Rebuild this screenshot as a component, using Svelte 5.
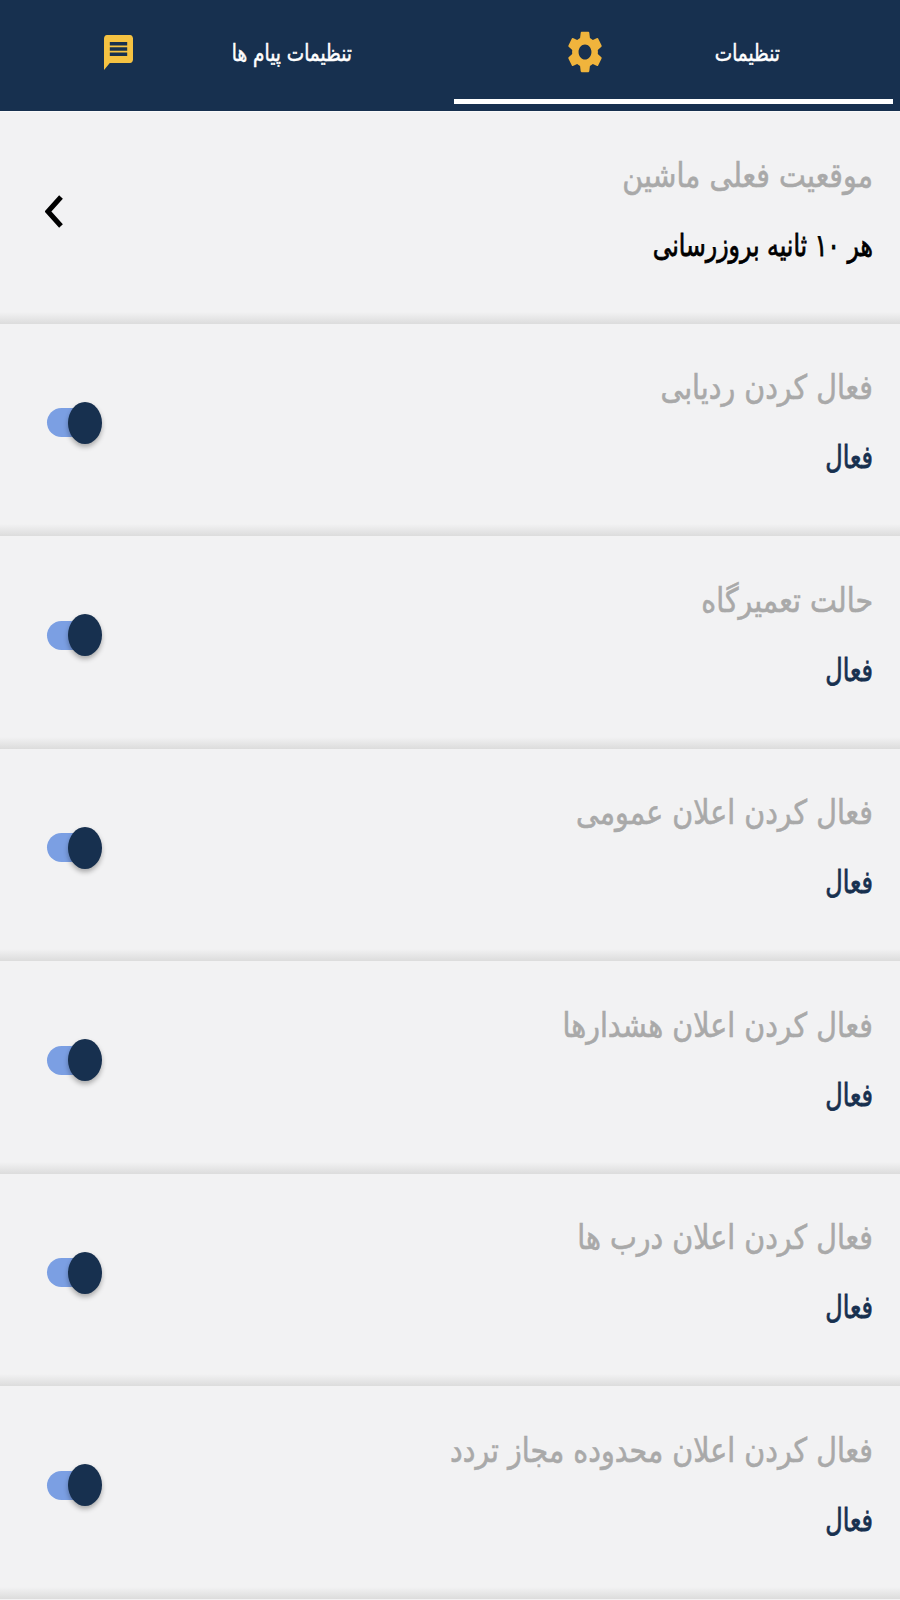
<script>
	const rows = [
		'فعال کردن ردیابی',
		'حالت تعمیرگاه',
		'فعال کردن اعلان عمومی',
		'فعال کردن اعلان هشدارها',
		'فعال کردن اعلان درب ها',
		'فعال کردن اعلان محدوده مجاز تردد'
	];
</script>

<div class="page" dir="rtl">
	<header class="tabs">
		<div class="tab active">
			<span class="tab-label">تنظیمات</span>
			<svg class="gear" viewBox="2.5 2 19 20" preserveAspectRatio="none">
				<path d="M19.14 12.94c.04-.3.06-.61.06-.94 0-.32-.02-.64-.07-.94l2.03-1.58c.18-.14.23-.41.12-.61l-1.92-3.32c-.12-.22-.37-.29-.59-.22l-2.39.96c-.5-.38-1.03-.7-1.62-.94l-.36-2.54c-.04-.24-.24-.41-.48-.41h-3.84c-.24 0-.43.17-.47.41l-.36 2.54c-.59.24-1.13.57-1.62.94l-2.39-.96c-.22-.08-.47 0-.59.22L2.74 8.87c-.12.21-.08.47.12.61l2.03 1.58c-.05.3-.09.63-.09.94s.02.64.07.94l-2.03 1.58c-.18.14-.23.41-.12.61l1.92 3.32c.12.22.37.29.59.22l2.39-.96c.5.38 1.03.7 1.62.94l.36 2.54c.05.24.24.41.48.41h3.84c.24 0 .44-.17.47-.41l.36-2.54c.59-.24 1.13-.56 1.62-.94l2.39.96c.22.08.47 0 .59-.22l1.92-3.32c.12-.22.07-.47-.12-.61l-2.01-1.58zM12 15.6c-1.98 0-3.6-1.62-3.6-3.6s1.62-3.6 3.6-3.6 3.6 1.62 3.6 3.6-1.62 3.6-3.6 3.6z" />
			</svg>
		</div>
		<div class="tab">
			<span class="tab-label">تنظیمات پیام ها</span>
			<svg class="chat" viewBox="2 2 20 20" preserveAspectRatio="none">
				<path d="M20 2H4c-1.1 0-1.99.9-1.99 2L2 22l4-4h14c1.1 0 2-.9 2-2V4c0-1.1-.9-2-2-2zm-2 12H6v-2h12v2zm0-3H6V9h12v2zm0-3H6V6h12v2z" />
			</svg>
		</div>
	</header>

	<div class="row first">
		<div class="texts">
			<div class="title">موقعیت فعلی ماشین</div>
			<div class="sub dark">هر ۱۰ ثانیه بروزرسانی</div>
		</div>
		<svg class="chevron" viewBox="0 0 18 33">
			<polyline points="16,2 3,16.5 16,31" />
		</svg>
	</div>

	{#each rows as title}
		<div class="row">
			<div class="texts">
				<div class="title">{title}</div>
				<div class="sub">فعال</div>
			</div>
			<div class="toggle">
				<span class="track"></span>
				<span class="knob"></span>
			</div>
		</div>
	{/each}
</div>

<style>
	:global(body) {
		background: #f2f2f3;
	}

	.page {
		width: 900px;
		height: 1600px;
		overflow: hidden;
		background: #f2f2f3;
		font-family: 'DejaVu Sans', 'Noto Sans', sans-serif;
	}

	.tabs {
		display: grid;
		grid-template-columns: 1fr 1fr;
		height: 111px;
		background: #17304f;
		border-bottom: 1px solid #fafafa;
	}

	.tab {
		display: flex;
		align-items: center;
		height: 104px;
		padding-right: 98px;
		box-sizing: border-box;
		color: #fff;
	}

	.tab.active {
		margin: 0 7px 0 4px;
		padding-top: 5px;
		padding-right: 113px;
		border-bottom: 5px solid #fff;
	}

	.tab-label {
		font-size: 18.5px;
		-webkit-text-stroke: 0.4px #fff;
		transform: scaleY(1.25);
	}

	.gear {
		width: 34px;
		height: 42px;
		margin-right: 113px;
		fill: #f0b43c;
	}

	.chat {
		width: 29px;
		height: 35px;
		margin-right: 99px;
		fill: #f5c242;
	}

	.row {
		display: flex;
		align-items: center;
		justify-content: space-between;
		height: 212.5px;
		box-sizing: border-box;
		padding: 0 27px 13px 47px;
		background: linear-gradient(to bottom, #f2f2f3 0, #f2f2f3 calc(100% - 12px), #dcdcdc 100%);
	}

	.row.first {
		height: 211.5px;
		padding-left: 45px;
	}

	.texts {
		display: flex;
		flex-direction: column;
		gap: 30px;
	}

	.title {
		font-size: 28.5px;
		line-height: 40px;
		color: #a9a9a9;
		-webkit-text-stroke: 0.5px #a9a9a9;
		transform: scaleY(1.18);
		transform-origin: right center;
	}

	.sub {
		font-size: 24px;
		line-height: 40px;
		color: #17304f;
		-webkit-text-stroke: 0.6px #17304f;
		transform: scaleY(1.3);
		transform-origin: right center;
	}

	.sub.dark {
		font-size: 23.6px;
		color: #000;
		-webkit-text-stroke: 0.6px #000;
	}

	.chevron {
		width: 18px;
		height: 33px;
		fill: none;
		stroke: #000;
		stroke-width: 5;
	}

	.toggle {
		position: relative;
		width: 55px;
		height: 42px;
		margin-top: -1px;
	}

	.track {
		position: absolute;
		left: 0;
		top: 6.5px;
		width: 40px;
		height: 29px;
		border-radius: 14.5px;
		background: #7b9fe3;
	}

	.knob {
		position: absolute;
		right: 0;
		top: 0;
		width: 34px;
		height: 42px;
		border-radius: 50%;
		background: #17304f;
		box-shadow: 0 3px 5px rgba(0, 0, 0, 0.3);
	}
</style>
